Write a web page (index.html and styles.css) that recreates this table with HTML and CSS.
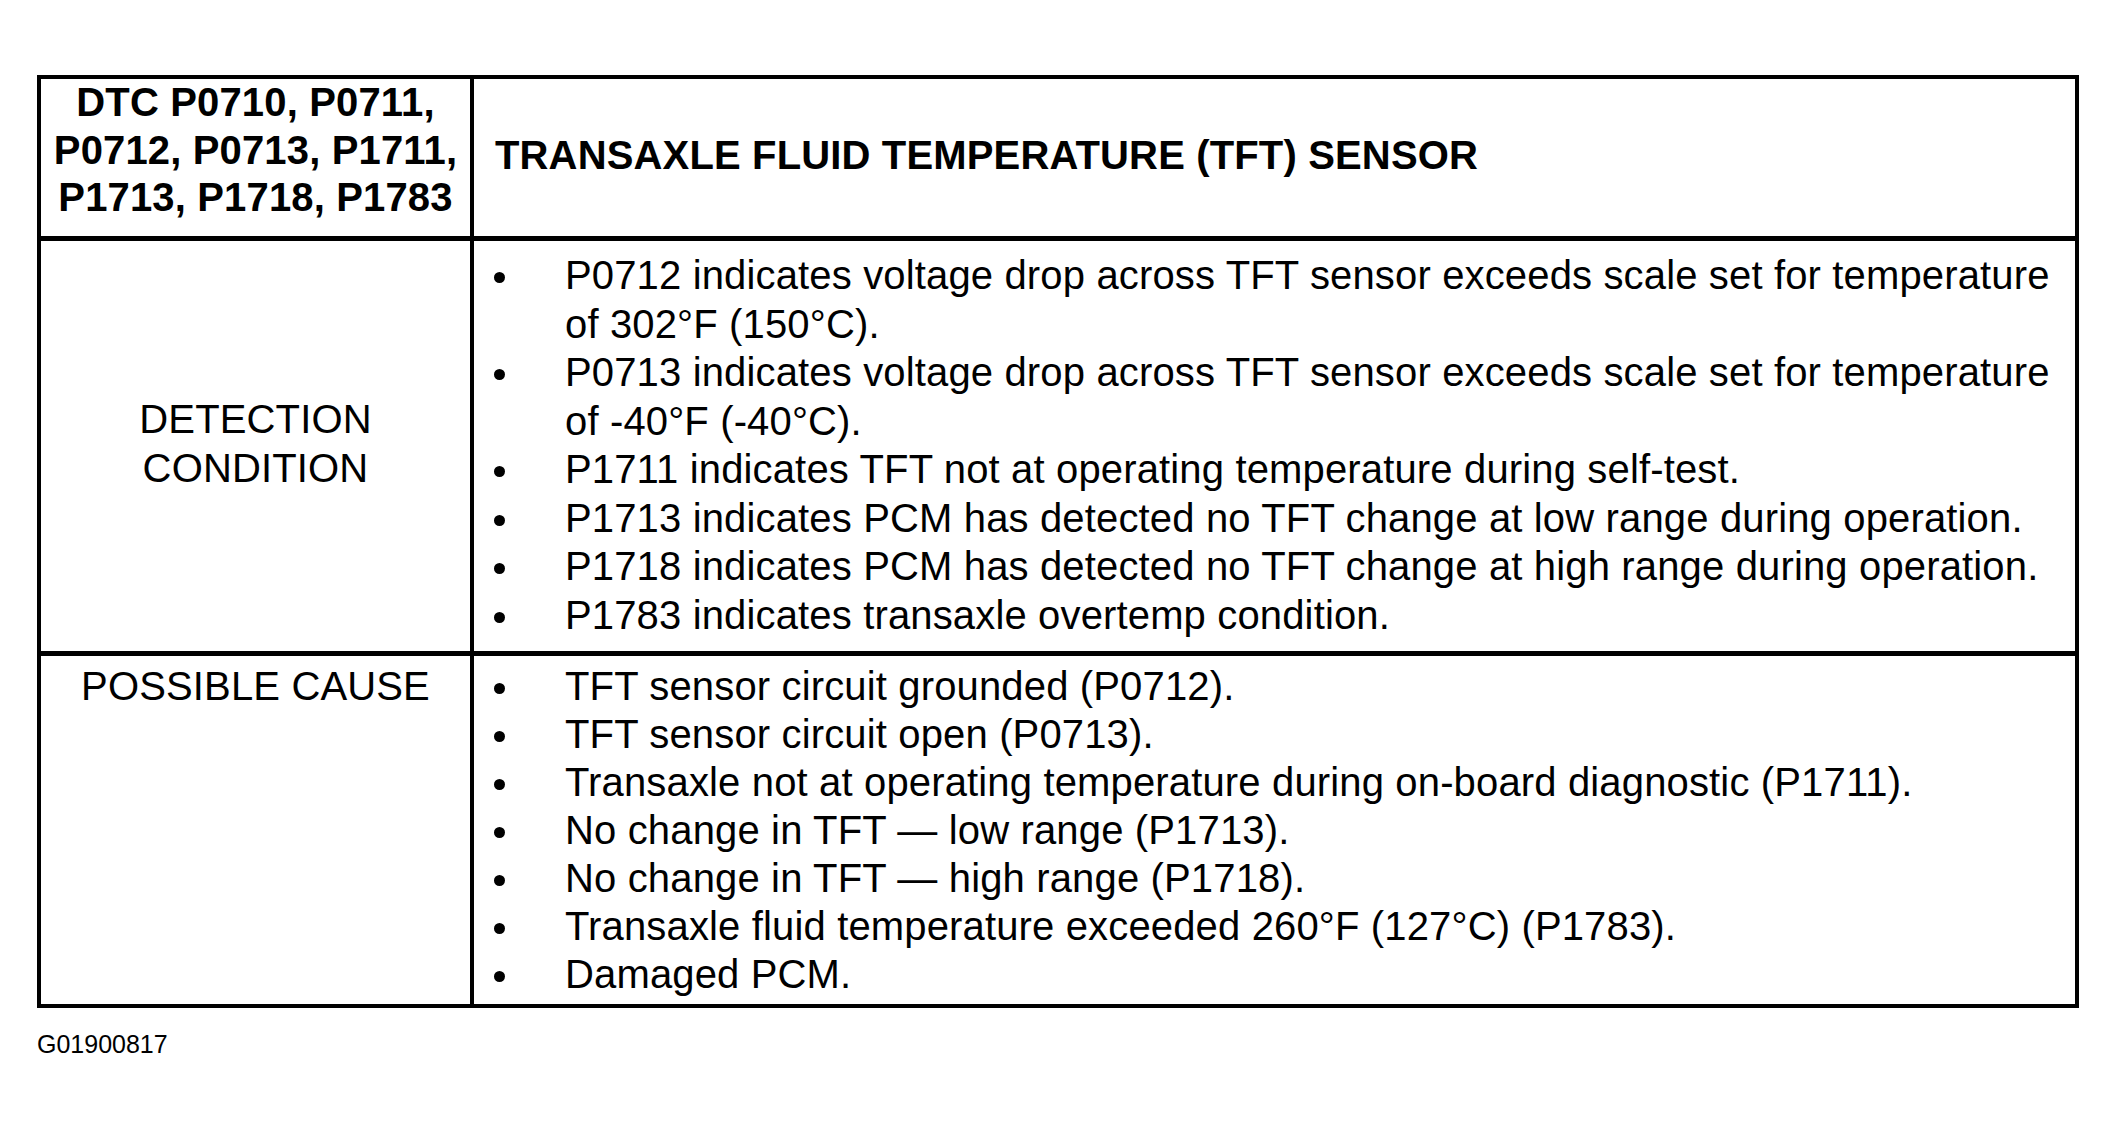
FILE: index.html
```html
<!DOCTYPE html>
<html lang="en">
<head>
<meta charset="utf-8">
<title>DTC P0710 - TFT Sensor</title>
<link rel="stylesheet" href="styles.css">
</head>
<body>
<div class="sheet">
  <div class="table">
    <div class="cell head-codes">DTC P0710, P0711,<br>P0712, P0713, P1711,<br>P1713, P1718, P1783</div>
    <div class="cell head-title">TRANSAXLE FLUID TEMPERATURE (TFT) SENSOR</div>

    <div class="cell label label-mid">DETECTION<br>CONDITION</div>
    <div class="cell list list-first">
      <ul class="items">
        <li class="item"><span class="dot"></span><span class="txt">P0712 indicates voltage drop across TFT sensor exceeds scale set for temperature of 302°F (150°C).</span></li>
        <li class="item"><span class="dot"></span><span class="txt">P0713 indicates voltage drop across TFT sensor exceeds scale set for temperature of -40°F (-40°C).</span></li>
        <li class="item"><span class="dot"></span><span class="txt">P1711 indicates TFT not at operating temperature during self-test.</span></li>
        <li class="item"><span class="dot"></span><span class="txt">P1713 indicates PCM has detected no TFT change at low range during operation.</span></li>
        <li class="item"><span class="dot"></span><span class="txt">P1718 indicates PCM has detected no TFT change at high range during operation.</span></li>
        <li class="item"><span class="dot"></span><span class="txt">P1783 indicates transaxle overtemp condition.</span></li>
      </ul>
    </div>

    <div class="cell label label-top last">POSSIBLE CAUSE</div>
    <div class="cell list list-last last">
      <ul class="items">
        <li class="item"><span class="dot"></span><span class="txt">TFT sensor circuit grounded (P0712).</span></li>
        <li class="item"><span class="dot"></span><span class="txt">TFT sensor circuit open (P0713).</span></li>
        <li class="item"><span class="dot"></span><span class="txt">Transaxle not at operating temperature during on-board diagnostic (P1711).</span></li>
        <li class="item"><span class="dot"></span><span class="txt">No change in TFT — low range (P1713).</span></li>
        <li class="item"><span class="dot"></span><span class="txt">No change in TFT — high range (P1718).</span></li>
        <li class="item"><span class="dot"></span><span class="txt">Transaxle fluid temperature exceeded 260°F (127°C) (P1783).</span></li>
        <li class="item"><span class="dot"></span><span class="txt">Damaged PCM.</span></li>
      </ul>
    </div>
  </div>
  <div class="figure-code">G01900817</div>
</div>
</body>
</html>
```

FILE: styles.css
```css
html, body {
  margin: 0;
  padding: 0;
  background: #ffffff;
}

body {
  font-family: "Liberation Sans", Arial, Helvetica, sans-serif;
  color: #000000;
}

.sheet {
  padding: 75px 0 0 37px;
}

.table {
  box-sizing: border-box;
  width: 2042px;
  border: 4px solid #000000;
  display: grid;
  grid-template-columns: 433px 1fr;
}

.cell {
  box-sizing: border-box;
  border-bottom: 5px solid #000000;
  font-size: 40px;
  line-height: 48px;
  letter-spacing: 0.15px;
}

.cell:nth-child(odd) {
  border-right: 4px solid #000000;
}

.cell.last {
  border-bottom: none;
}

.head-codes {
  height: 162px;
  display: flex;
  flex-direction: column;
  justify-content: center;
  align-items: center;
  text-align: center;
  font-weight: bold;
  line-height: 47.5px;
  padding-bottom: 14px;
}

.head-title {
  height: 162px;
  display: flex;
  align-items: center;
  padding-left: 21px;
  padding-bottom: 5px;
  font-weight: bold;
}

.label {
  text-align: center;
}

.label-mid {
  display: flex;
  flex-direction: column;
  justify-content: center;
  align-items: center;
  line-height: 49px;
  padding-bottom: 5px;
}

.label-top {
  padding-top: 6px;
}

.list {
  padding-left: 21px;
}

.list-first {
  line-height: 48.5px;
  padding-top: 10px;
  padding-bottom: 12px;
}

.list-last {
  padding-top: 6px;
  padding-bottom: 6px;
}

.items {
  list-style: none;
  margin: 0;
  padding: 0;
}

.item {
  display: grid;
  grid-template-columns: 70px 1fr;
}

.dot {
  width: 11px;
  height: 11px;
  border-radius: 50%;
  background: #000000;
  margin-top: 21px;
  margin-left: -1px;
}

.txt {
  display: block;
}

.figure-code {
  margin-top: 21px;
  font-size: 25px;
  line-height: 30px;
}
```
